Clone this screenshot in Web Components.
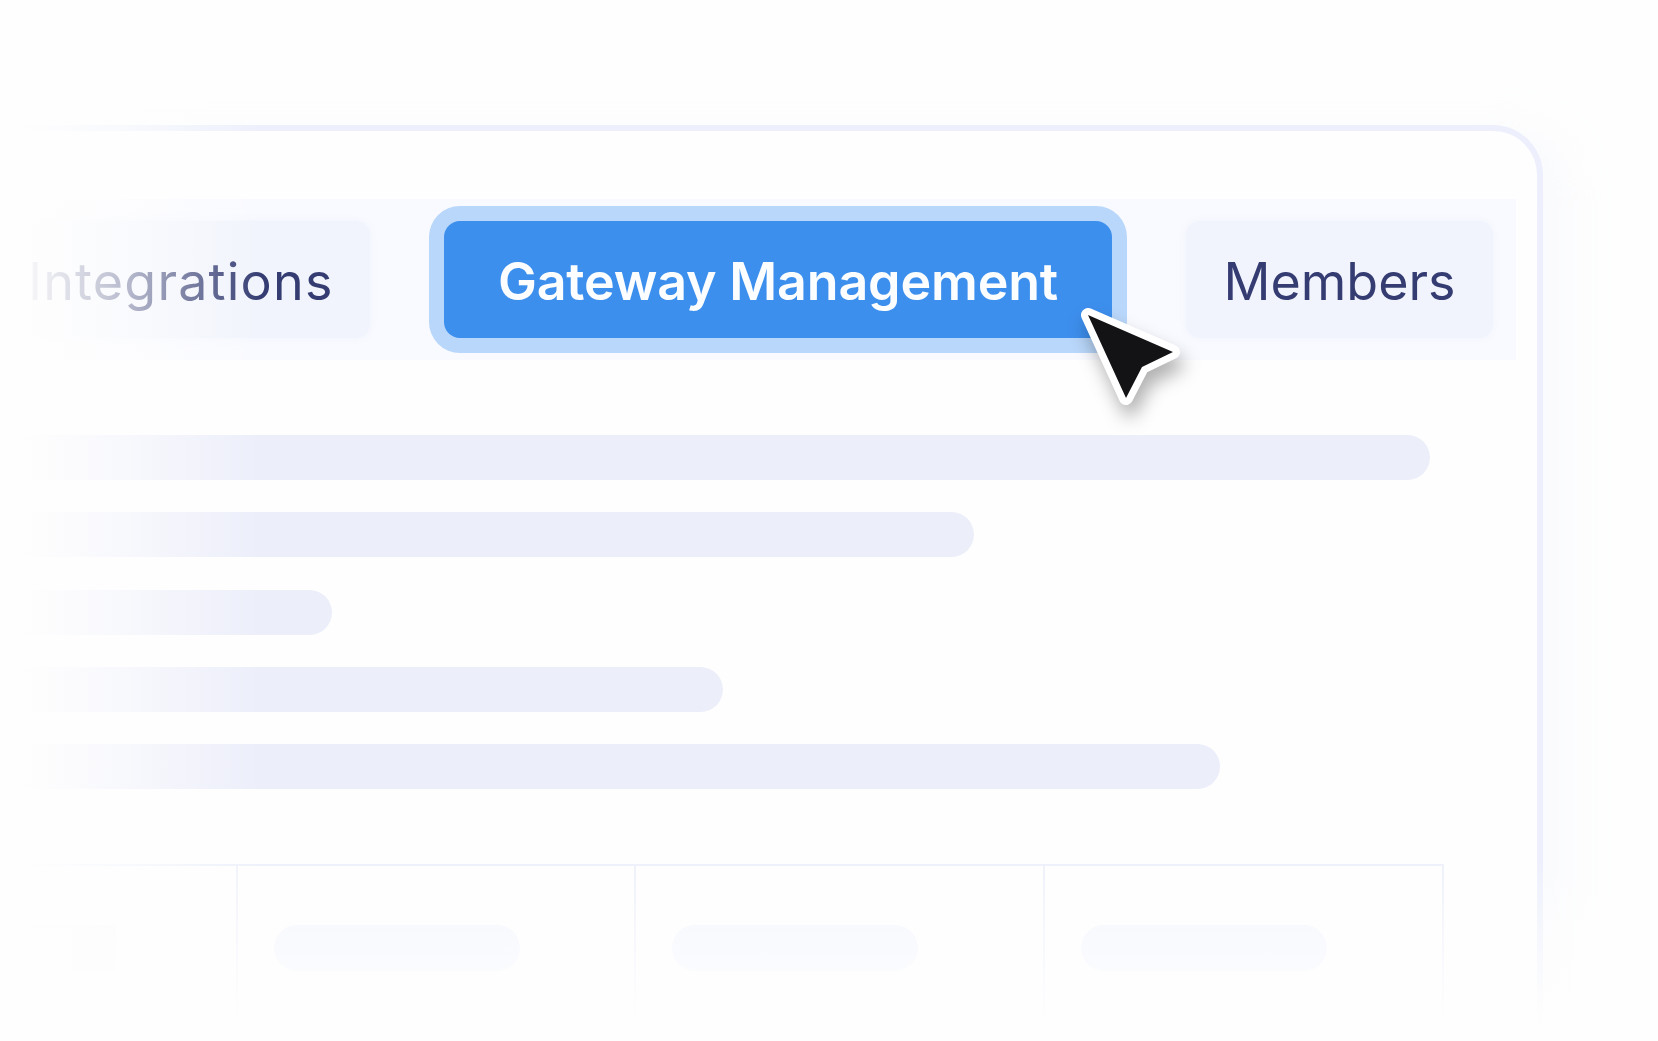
<!DOCTYPE html>
<html lang="en"><head><meta charset="utf-8"><title>Gateway Management</title>
<style>html,body{margin:0;padding:0;background:#fefefe}</style></head>
<body>
<app-stage>
  <fade-frame>
    <tab-bar>
      <tab-item style="--w:370px;--ml:0px;--pad:28px;--just:flex-start;--ls:1.2px">Integrations</tab-item>
      <tab-item active>Gateway Management</tab-item>
      <tab-item style="--w:307px;--ml:74px;--ls:0px">Members</tab-item>
    </tab-bar>
    <bar-list>
      <skeleton-bar style="--w:1430px"></skeleton-bar>
      <skeleton-bar style="--w:974px"></skeleton-bar>
      <skeleton-bar style="--w:332px"></skeleton-bar>
      <skeleton-bar style="--w:723px"></skeleton-bar>
      <skeleton-bar style="--w:1220px"></skeleton-bar>
    </bar-list>
    <cell-table></cell-table>
  </fade-frame>
  <cursor-arrow></cursor-arrow>
</app-stage>
<script>
function def(name, css, html){
  customElements.define(name, class extends HTMLElement{
    constructor(){super();const r=this.attachShadow({mode:'open'});r.innerHTML='<style>'+css+'</style>'+html;}
  });
}
def('app-stage',`
  :host{display:block;position:relative;width:1658px;height:1041px;overflow:hidden;background:#fefefe;font-family:Inter,"Liberation Sans",sans-serif;padding-top:125px;box-sizing:border-box}
  .left,.bottom{position:absolute;pointer-events:none;z-index:2}
  .left{left:0;top:0;bottom:0;width:270px;background:linear-gradient(90deg,#fefefe 0,#fefefe 18px,rgba(254,254,254,.66) 125px,rgba(254,254,254,0) 262px)}
  .bottom{left:0;right:0;top:860px;bottom:0;background:linear-gradient(180deg,rgba(254,254,254,0) 0,rgba(254,254,254,.5) 70px,#fefefe 165px)}
`,`<slot></slot><div class="left"></div><div class="bottom"></div>`);
def('fade-frame',`
  :host{display:flex;flex-direction:column;box-sizing:border-box;width:1543px;height:1000px;border:solid #edf0fc;border-width:6px 6px 0 0;border-top-right-radius:50px;padding-top:68px;background:#fefefe;box-shadow:24px 6px 44px rgba(232,236,252,.22)}
`,`<slot></slot>`);
def('tab-bar',`
  :host{display:flex;align-items:center;box-sizing:border-box;height:161px;margin-right:21px;background:#f9faff}
`,`<slot></slot>`);
def('tab-item',`
  :host{display:flex;align-items:center;justify-content:var(--just,center);box-sizing:border-box;flex:none;width:var(--w,auto);height:117px;margin-left:var(--ml,0);padding-left:var(--pad,0);padding-top:4px;background:#f1f4fc;box-shadow:0 0 7px 2px #f3f6fd;border-radius:14px;color:#343c72;font-size:52px;font-weight:400;letter-spacing:var(--ls,0);white-space:nowrap}
  :host([active]){width:668px;margin-left:74px;background:#3d8fee;color:#fbfdff;font-weight:600;letter-spacing:-.18px;border-radius:16px;box-shadow:0 0 0 15px #b9d7fa}
`,`<slot></slot>`);
def('bar-list',`
  :host{display:flex;flex-direction:column;gap:32.3px;margin-top:75px}
`,`<slot></slot>`);
def('skeleton-bar',`
  :host{display:block;width:var(--w);height:45px;background:#eceefa;border-radius:0 23px 23px 0}
`,``);
def('cell-table',`
  :host{display:grid;grid-template-columns:238px 398px 409px 399px;width:1444px;box-sizing:border-box;margin-top:75px;border-top:2px solid #eef1fb;height:220px}
  .c{border-right:2px solid #eef1fb;box-sizing:border-box;padding-top:59px}
  .c i{display:block;height:46px;width:246px;margin-left:36px;background:#f3f5fe;border-radius:23px}
  .c:first-of-type i{width:116px;margin-left:0;background:#fbf5fb;border-radius:0}
`,`<div class="c"><i></i></div><div class="c"><i></i></div><div class="c"><i></i></div><div class="c"><i></i></div>`);
def('cursor-arrow',`
  :host{position:absolute;left:1070px;top:296px;width:120px;height:124px;z-index:3;display:block}
  svg{display:block;overflow:visible;filter:drop-shadow(4px 12px 9px rgba(0,0,0,.3))}
`,`<svg width="120" height="124" viewBox="0 0 120 124"><path d="M18 19 L103 56 L72 71 L56 102 Z" fill="#131316" stroke="#fff" stroke-width="14" stroke-linejoin="round" paint-order="stroke"/></svg>`);
</script>
</body></html>
